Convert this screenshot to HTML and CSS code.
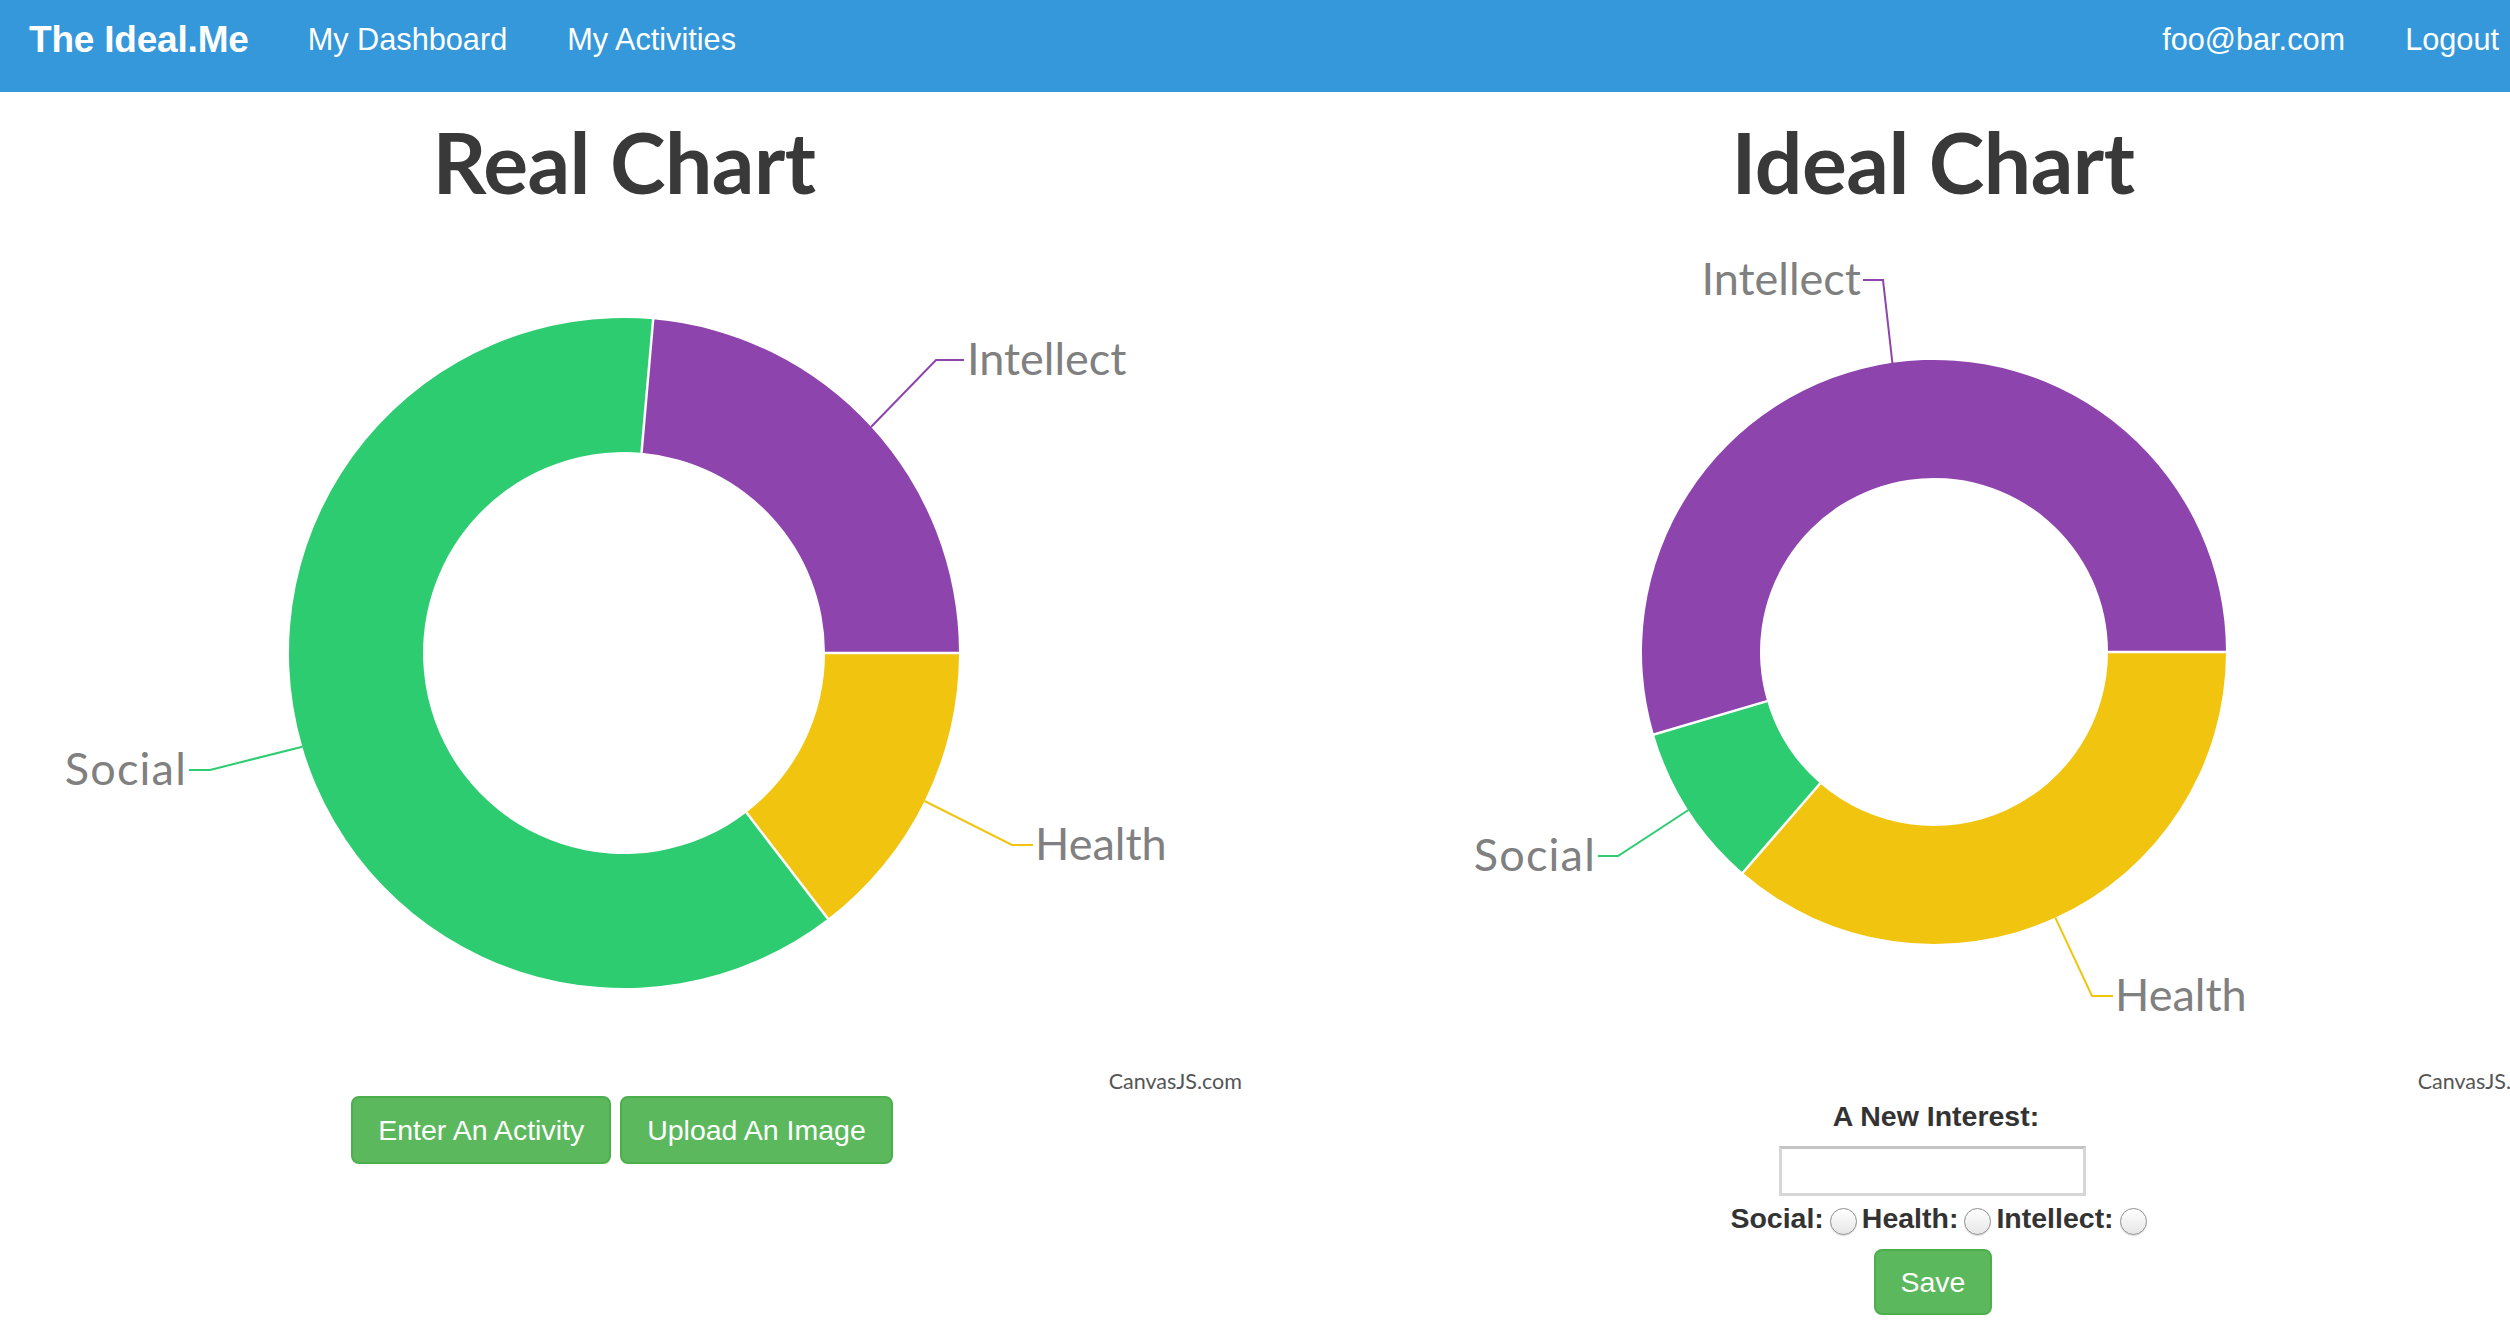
FILE: index.html
```html
<!DOCTYPE html>
<html lang="en">
<head>
<meta charset="utf-8">
<title>The Ideal.Me</title>
<link rel="stylesheet" href="styles.css">
</head>
<body>
<nav class="navbar">
  <a class="brand" href="#">The Ideal.Me</a>
  <ul class="nav-links">
    <li><a href="#">My Dashboard</a></li>
    <li><a href="#">My Activities</a></li>
  </ul>
  <ul class="nav-links nav-right">
    <li><a href="#">foo@bar.com</a></li>
    <li><a href="#" class="last">Logout</a></li>
  </ul>
</nav>

<main class="charts">
  <section class="chart-col">
    <h1 class="chart-title">Real Chart</h1>
    <svg class="chart" width="1248" height="884" viewBox="0 0 1248 884">
      <path class="seg-health" d="M959,442 A335,335 0 0 1 827.9,707.8 L746.4,601.5 A201,201 0 0 0 825,442 Z"/>
      <path class="seg-social" d="M827.9,707.8 A335,335 0 1 1 653.2,108.3 L641.5,241.8 A201,201 0 1 0 746.4,601.5 Z"/>
      <path class="seg-intellect" d="M653.2,108.3 A335,335 0 0 1 959,442 L825,442 A201,201 0 0 0 641.5,241.8 Z"/>
      <line class="sep" x1="825" y1="442" x2="960" y2="442"/>
      <line class="sep" x1="746.4" y1="601.5" x2="828.5" y2="708.6"/>
      <line class="sep" x1="641.5" y1="241.8" x2="653.3" y2="107"/>
      <polyline class="lead lead-intellect" points="871,216 936,149 964,149"/>
      <polyline class="lead lead-health" points="924.5,590 1012,634 1033,634"/>
      <polyline class="lead lead-social" points="302.4,535.7 210,559 189,559"/>
      <text class="lbl" x="967" y="164">Intellect</text>
      <text class="lbl" x="1035" y="649">Health</text>
      <text class="lbl lbl-wide" x="187" y="574" text-anchor="end">Social</text>
      <text class="credit" x="1242" y="878" text-anchor="end">CanvasJS.com</text>
    </svg>
    <div class="actions">
      <button class="btn" type="button">Enter An Activity</button>
      <button class="btn" type="button">Upload An Image</button>
    </div>
  </section>

  <section class="chart-col">
    <h1 class="chart-title">Ideal Chart</h1>
    <svg class="chart" width="1248" height="884" viewBox="0 0 1248 884">
      <path class="seg-health" d="M917,441 A292,292 0 0 1 433.8,661.7 L511.1,572.5 A174,174 0 0 0 799,441 Z"/>
      <path class="seg-social" d="M433.8,661.7 A292,292 0 0 1 344.9,523.4 L458.1,490.1 A174,174 0 0 0 511.1,572.5 Z"/>
      <path class="seg-intellect" d="M344.9,523.4 A292,292 0 1 1 917,441 L799,441 A174,174 0 1 0 458.1,490.1 Z"/>
      <line class="sep" x1="799" y1="441" x2="918" y2="441"/>
      <line class="sep" x1="511.1" y1="572.5" x2="433.1" y2="662.5"/>
      <line class="sep" x1="458.1" y1="490.1" x2="344" y2="523.7"/>
      <polyline class="lead lead-intellect" points="583.4,152 574,69 554,69"/>
      <polyline class="lead lead-social" points="379.4,599 309,645 289,645"/>
      <polyline class="lead lead-health" points="746.3,706.6 783,785 804,785"/>
      <text class="lbl" x="552" y="84" text-anchor="end">Intellect</text>
      <text class="lbl lbl-wide" x="287" y="660" text-anchor="end">Social</text>
      <text class="lbl" x="806" y="800">Health</text>
      <text class="credit" x="1242" y="878" text-anchor="end">CanvasJS.com</text>
    </svg>
    <form class="interest-form">
      <label class="form-label" for="interest">A New Interest:</label>
      <input class="text-input" id="interest" type="text">
      <div class="radio-row">
        <label>Social:</label><input class="radio" type="radio" name="kind">
        <label>Health:</label><input class="radio" type="radio" name="kind">
        <label>Intellect:</label><input class="radio" type="radio" name="kind">
      </div>
      <button class="btn btn-save" type="button">Save</button>
    </form>
  </section>
</main>
</body>
</html>
```

FILE: styles.css
```css
html, body {
  margin: 0;
  padding: 0;
  overflow: hidden;
  background: #fff;
}

body {
  font-family: "Liberation Sans", Arial, sans-serif;
  color: #333;
  width: 2510px;
  height: 1340px;
}

.navbar {
  display: flex;
  align-items: flex-start;
  height: 92px;
  background: #3498db;
}

.brand {
  display: block;
  padding: 0 29px;
  line-height: 80px;
  font-size: 37px;
  font-weight: bold;
  color: #fff;
  text-decoration: none;
  letter-spacing: -0.2px;
}

.nav-links {
  display: flex;
  list-style: none;
  margin: 0;
  padding: 0;
}

.nav-links a {
  display: block;
  padding: 0 30px;
  line-height: 80px;
  font-size: 30.7px;
  color: #fff;
  text-decoration: none;
}

.nav-right {
  margin-left: auto;
}

.nav-links a.last {
  padding-right: 11px;
}

.charts {
  display: flex;
  gap: 61px;
  width: 2557px;
}

.chart-col {
  flex: none;
  width: 1248px;
  display: flex;
  flex-direction: column;
  align-items: center;
}

.chart-title {
  margin: 28px 0 7px;
  font-family: Lato, "Open Sans", sans-serif;
  font-weight: bold;
  font-size: 84px;
  line-height: 84px;
  color: #393939;
  letter-spacing: -0.5px;
}

.chart {
  display: block;
}

.seg-health { fill: #f1c40f; }
.seg-social { fill: #2ecc71; }
.seg-intellect { fill: #8e44ad; }

.sep {
  stroke: #fff;
  stroke-width: 2.5;
}

.lead {
  fill: none;
  stroke-width: 2;
}
.lead-health { stroke: #f1c40f; }
.lead-social { stroke: #2ecc71; }
.lead-intellect { stroke: #8e44ad; }

.lbl {
  font-family: Lato, "Open Sans", sans-serif;
  font-size: 45px;
  fill: #808080;
}

.lbl-wide {
  letter-spacing: 1.2px;
}

.credit {
  font-family: Lato, "Open Sans", sans-serif;
  font-size: 21.5px;
  fill: #555;
}

.actions {
  display: flex;
  gap: 9px;
  margin-top: 1px;
  margin-left: -4px;
}

.btn {
  font-family: "Liberation Sans", Arial, sans-serif;
  font-size: 28.5px;
  line-height: 40px;
  padding: 12px 25px;
  color: #fff;
  background: #5cb85c;
  border: 2px solid #4cae4c;
  border-radius: 8px;
  cursor: pointer;
}

.interest-form {
  display: flex;
  flex-direction: column;
  align-items: center;
  margin-top: 1px;
}

.form-label {
  font-size: 28.5px;
  font-weight: bold;
  line-height: 40px;
  color: #333;
  margin-bottom: 10px;
  margin-left: 6px;
}

.text-input {
  box-sizing: border-box;
  width: 307px;
  height: 50px;
  margin: 0;
  border: 3px solid #d6d6d6;
  border-top-color: #c4c4c4;
  background: #fff;
}

.radio-row {
  display: flex;
  align-items: center;
  height: 40px;
  margin-top: 2px;
  font-size: 28.5px;
  font-weight: bold;
  color: #333;
  margin-left: 16px;
}

.radio {
  appearance: none;
  -webkit-appearance: none;
  box-sizing: border-box;
  width: 27px;
  height: 27px;
  margin: 6px 5px 0 6px;
  border-radius: 50%;
  border: 1px solid #8f8f8f;
  background: linear-gradient(#ffffff, #e6e6e6);
  box-shadow: inset 0 1px 1px rgba(255,255,255,0.9), 0 1px 1px rgba(0,0,0,0.15);
}

.btn-save {
  margin-top: 11px;
  height: 66px;
  padding: 0 25px;
}
```
